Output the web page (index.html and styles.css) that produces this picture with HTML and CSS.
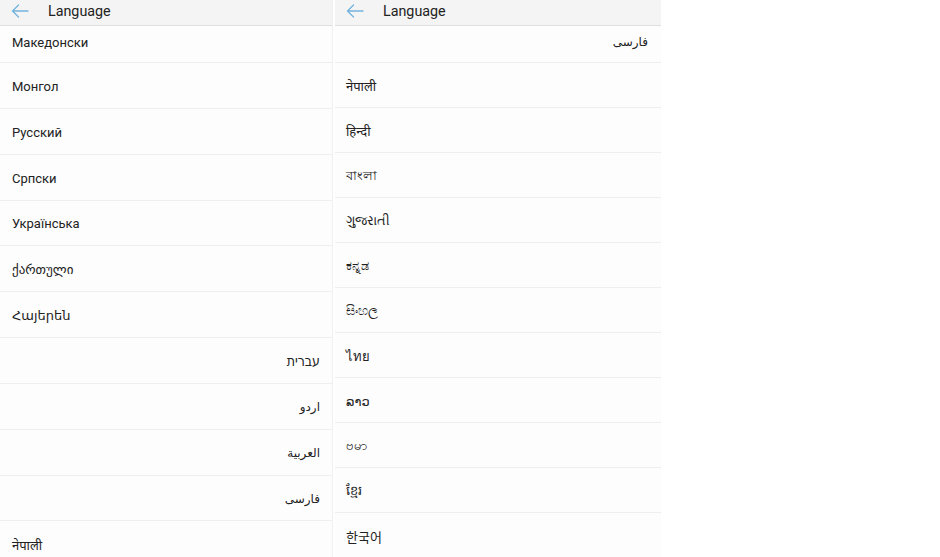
FILE: index.html
```html
<!DOCTYPE html>
<html lang="en">
<head>
<meta charset="utf-8">
<title>Language</title>
<link rel="stylesheet" href="styles.css">
</head>
<body>
<div class="screens">
  <section class="panel panel-left">
    <header class="topbar">
      <svg class="back" width="18" height="14" viewBox="0 0 18 14"><path d="M17 7H1.5M7.5 1L1.5 7l6 6" fill="none" stroke="#74b3de" stroke-width="1.3" stroke-linecap="round" stroke-linejoin="round"/></svg>
      <span class="title">Language</span>
    </header>
    <ul class="list list-left">
      <li class="row first">Македонски</li>
      <li class="row">Монгол</li>
      <li class="row">Русский</li>
      <li class="row">Српски</li>
      <li class="row">Українська</li>
      <li class="row">ქართული</li>
      <li class="row">Հայերեն</li>
      <li class="row rtl he" dir="rtl">עברית</li>
      <li class="row rtl ar" dir="rtl">اردو</li>
      <li class="row rtl ar" dir="rtl">العربية</li>
      <li class="row rtl ar" dir="rtl">فارسی</li>
      <li class="row">नेपाली</li>
    </ul>
  </section>
  <section class="panel panel-right">
    <header class="topbar">
      <svg class="back" width="18" height="14" viewBox="0 0 18 14"><path d="M17 7H1.5M7.5 1L1.5 7l6 6" fill="none" stroke="#74b3de" stroke-width="1.3" stroke-linecap="round" stroke-linejoin="round"/></svg>
      <span class="title">Language</span>
    </header>
    <ul class="list list-right">
      <li class="row first rtl ar" dir="rtl">فارسی</li>
      <li class="row">नेपाली</li>
      <li class="row">हिन्दी</li>
      <li class="row">বাংলা</li>
      <li class="row">ગુજરાતી</li>
      <li class="row">ಕನ್ನಡ</li>
      <li class="row">සිංහල</li>
      <li class="row">ไทย</li>
      <li class="row">ລາວ</li>
      <li class="row">ဗမာ</li>
      <li class="row">ខ្មែរ</li>
      <li class="row ko">한국어</li>
    </ul>
  </section>
</div>
</body>
</html>
```
FILE: styles.css
```css
html, body {
  margin: 0;
  padding: 0;
  background: #ffffff;
}
body {
  width: 940px;
  height: 557px;
  overflow: hidden;
  font-family: Roboto, "Noto Sans", "DejaVu Sans", "Noto Sans CJK KR", sans-serif;
  color: #222;
}
.screens {
  display: flex;
  gap: 2px;
  height: 557px;
}
.panel {
  background: #fdfdfd;
  height: 557px;
  overflow: hidden;
  display: flex;
  flex-direction: column;
}
.panel-left {
  width: 333px;
  border-right: 1px solid #f0f0f0;
  box-sizing: border-box;
}
.panel-right {
  width: 326px;
}
.topbar {
  height: 26px;
  box-sizing: border-box;
  background: #f4f4f4;
  border-bottom: 1px solid #dedede;
  display: flex;
  align-items: center;
  padding-left: 11px;
  flex-shrink: 0;
}
.back {
  display: block;
  margin-top: -3px;
}
.title {
  margin-left: 19px;
  font-size: 14.3px;
  color: #222;
  margin-top: -3px;
}
.list {
  list-style: none;
  margin: 0;
  padding: 0;
}
.row {
  box-sizing: border-box;
  border-bottom: 1px solid #efefef;
  display: flex;
  align-items: center;
  padding: 2px 12px 0;
  font-size: 13px;
  flex-shrink: 0;
}
.list-left .row {
  height: 45.85px;
}
.list-right .row {
  height: 45px;
  padding-left: 11px;
}
.list .row.first {
  height: 37px;
  padding-top: 0;
  padding-bottom: 4px;
}
.rtl {
  justify-content: flex-start;
}
.list-left .rtl {
  padding-right: 12px;
}
.list-right .rtl {
  padding-right: 13px;
}
.he {
  font-family: "DejaVu Sans Condensed", "DejaVu Sans", sans-serif;
  font-size: 14px;
}
.ar {
  font-size: 12px;
}
.ko {
  font-family: "Noto Sans CJK KR", sans-serif;
  font-size: 13px;
}
```
